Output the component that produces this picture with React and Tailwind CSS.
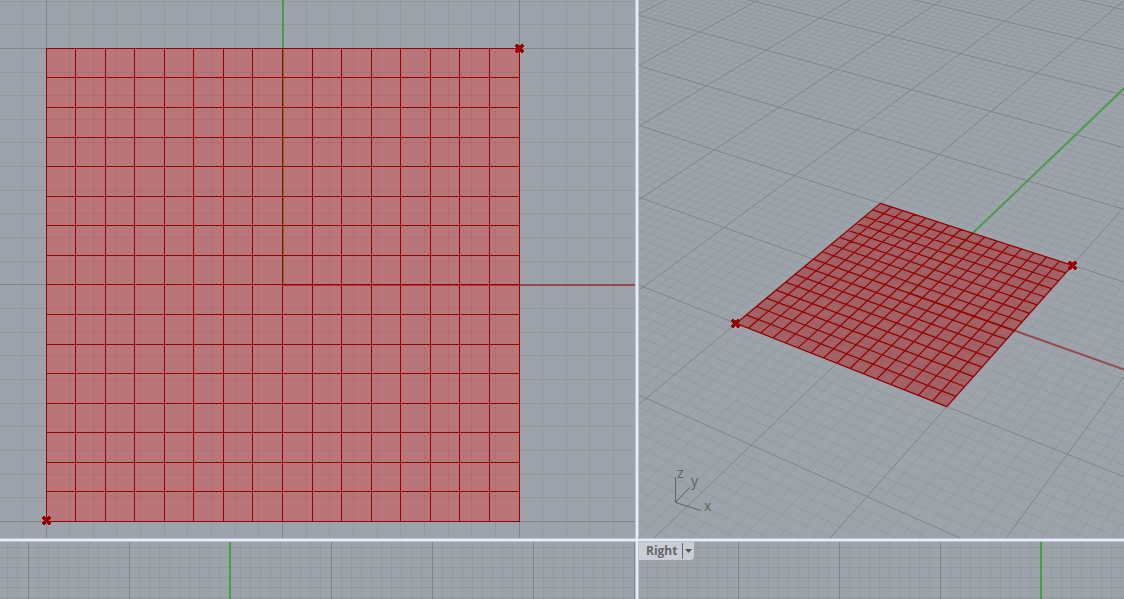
import React from 'react';

const COLORS = {
  minor: '#92999f',
  major: '#83838b',
  green: '#4b9b4b',
  red: '#964b4b',
  mesh: '#960000',
};

const range = (from, to) => Array.from({ length: to - from + 1 }, (_, i) => from + i);

const MARKER_ROWS = [
  '.##...##.',
  '#########',
  '#########',
  '.#######.',
  '..#####..',
  '.#######.',
  '#########',
  '####.####',
  '.##...##.',
];

// Point marker, centred on the pixel (x, y)
const Marker = ({ x, y }) => (
  <g fill={COLORS.mesh} shapeRendering="crispEdges">
    {MARKER_ROWS.flatMap((row, j) =>
      [...row].map((cell, i) =>
        cell === '#' ? <rect key={`${i}-${j}`} x={x - 4 + i} y={y - 4 + j} width="1" height="1" /> : null
      )
    )}
  </g>
);

// Flat construction grid: every tenth line is a major one
const FlatGrid = ({ originX, originY, step, countX, countY }) => {
  const cols = range(-countX, countX).map((k) => ({ k, at: Math.floor(originX + k * step) }));
  const rows = range(-countY, countY).map((k) => ({ k, at: Math.floor(originY + k * step) }));
  const isMajor = ({ k }) => k % 10 === 0;
  const isMinor = ({ k }) => k % 10 !== 0;

  return (
    <g shapeRendering="crispEdges">
      <g fill={COLORS.minor}>
        {cols.filter(isMinor).map(({ k, at }) => <rect key={`c${k}`} x={at} y="0" width="1" height="100%" />)}
        {rows.filter(isMinor).map(({ k, at }) => <rect key={`r${k}`} x="0" y={at} width="100%" height="1" />)}
      </g>
      <g fill={COLORS.major}>
        {cols.filter(isMajor).map(({ k, at }) => <rect key={`c${k}`} x={at} y="0" width="1" height="100%" />)}
        {rows.filter(isMajor).map(({ k, at }) => <rect key={`r${k}`} x="0" y={at} width="100%" height="1" />)}
      </g>
    </g>
  );
};

const Viewport = ({ label, children }) => (
  <section aria-label={label} className="relative min-w-0 min-h-0 bg-[#9da3aa] shadow-[0_0_0_1px_#bcc3d6]">
    {children}
  </section>
);

const TopView = () => (
  <svg className="block w-full h-full">
    <FlatGrid originX={282.5} originY={284.85} step={23.65} countX={40} countY={30} />
    <g shapeRendering="crispEdges">
      <rect x="282" y="0" width="2" height="284" fill={COLORS.green} />
      <rect x="283" y="284" width="100%" height="2" fill={COLORS.red} />
      <rect x="46" y="48" width="473" height="473" fill="#ff0000" fillOpacity="0.28" />
      <g fill={COLORS.mesh}>
        {range(0, 16).map((k) => (
          <React.Fragment key={k}>
            <rect x={Math.floor(46 + k * 29.563)} y="48" width="1" height="474" />
            <rect x="46" y={Math.floor(48.4 + k * 29.563)} width="474" height="1" />
          </React.Fragment>
        ))}
      </g>
    </g>
    <Marker x={519} y={48} />
    <Marker x={46} y={520} />
  </svg>
);

// Ground plane to screen
const project = (x, y) => {
  const w = 1 - 0.04051 * x + 0.07376 * y;
  const u = (63.5 * x + 134.69 * y + 909.8) / w - 639;
  const v = (23.76 * x - 43.02 * y + 293.4) / w;
  return [u.toFixed(2), v.toFixed(2)];
};

const segment = (x1, y1, x2, y2) => `M${project(x1, y1).join(' ')}L${project(x2, y2).join(' ')}`;

const GRID_X = [-14, 6];
const GRID_Y = [-6, 14];

const gridPath = (keep) => {
  const xs = range(GRID_X[0] * 10, GRID_X[1] * 10).filter(keep);
  const ys = range(GRID_Y[0] * 10, GRID_Y[1] * 10).filter(keep);
  return (
    xs.map((k) => segment(k / 10, GRID_Y[0], k / 10, GRID_Y[1])).join('') +
    ys.map((k) => segment(GRID_X[0], k / 10, GRID_X[1], k / 10)).join('')
  );
};

const minorPath = gridPath((k) => k % 10 !== 0);
const majorPath = gridPath((k) => k % 10 === 0);
const meshPath = range(-8, 8)
  .map((k) => segment(k / 8, -1, k / 8, 1) + segment(-1, k / 8, 1, k / 8))
  .join('');
const meshOutline = [project(-1, -1), project(-1, 1), project(1, 1), project(1, -1)].join(' ');

const PerspectiveView = () => (
  <svg className="block w-full h-full" fill="none">
    <path d={minorPath} stroke={COLORS.minor} strokeOpacity="0.8" />
    <path d={majorPath} stroke={COLORS.major} />
    <path d={segment(0, 0, 0, GRID_Y[1])} stroke={COLORS.green} strokeWidth="2" />
    <path d={segment(0, 0, GRID_X[1], 0)} stroke={COLORS.red} strokeWidth="2" />
    <polygon points={meshOutline} fill="#aa0000" fillOpacity="0.4" />
    <path d={meshPath} stroke={COLORS.mesh} strokeWidth="1.25" />
    <Marker x={433} y={265} />
    <Marker x={96} y={323} />

    {/* World axes icon */}
    <path d="M36.5 477.5V502.5L50.5 487.5M36.5 502.5L62 510.5" stroke="#616161" />
    <g fill="#616161" className="text-[14px] font-['Open_Sans',sans-serif]">
      <text x="38" y="478">z</text>
      <text x="52" y="486">y</text>
      <text x="65" y="511">x</text>
    </g>
  </svg>
);

const ElevationView = ({ originX }) => (
  <svg className="block w-full h-full">
    <FlatGrid originX={originX} originY={-25} step={10.1} countX={90} countY={9} />
    <rect x={Math.floor(originX) - 1} y="0" width="2" height="100%" fill={COLORS.green} />
  </svg>
);

const ViewportTitle = ({ children }) => (
  <button
    type="button"
    className="absolute left-0 top-0 flex h-[18px] items-center rounded-br bg-[#c9ced4] pl-[7px] text-xs leading-4 font-bold text-[#666666] font-['Open_Sans',sans-serif]"
  >
    <span className="w-9 text-left">{children}</span>
    <span className="flex h-4 w-3 items-center justify-center border-l border-[#666666]">
      <svg width="7" height="4" fill="#555555">
        <path d="M0 0H7L3.5 4Z" />
      </svg>
    </span>
  </button>
);

const App = () => (
  <main className="grid h-screen w-full grid-cols-[635fr_485fr] grid-rows-[538fr_57fr] gap-1 overflow-hidden bg-[#e9ebf4]">
    <Viewport label="Top"><TopView /></Viewport>
    <Viewport label="Perspective"><PerspectiveView /></Viewport>
    <Viewport label="Front"><ElevationView originX={230} /></Viewport>
    <Viewport label="Right">
      <ElevationView originX={402} />
      <ViewportTitle>Right</ViewportTitle>
    </Viewport>
  </main>
);

export default App;
